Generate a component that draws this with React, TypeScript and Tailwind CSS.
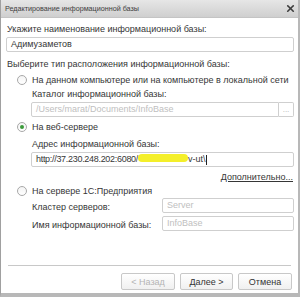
import { X } from 'lucide-react';

function Radio({ checked }: { checked?: boolean }) {
  return (
    <span className="w-[10px] h-[10px] rounded-full border border-[#a8a8a8] bg-gradient-to-b from-[#f4f4f4] to-white flex items-center justify-center shrink-0">
      {checked && <span className="w-[4px] h-[4px] rounded-full bg-[#3a9a3a]" />}
    </span>
  );
}

function Field({ children, className = '' }: { children?: React.ReactNode; className?: string }) {
  return (
    <div className={`h-[15px] border border-[#cfcfcf] rounded-[2px] bg-white flex items-center px-[4px] leading-none whitespace-nowrap overflow-hidden ${className}`}>
      {children}
    </div>
  );
}

function Button({ children, disabled }: { children: React.ReactNode; disabled?: boolean }) {
  return (
    <div
      className={`h-[17px] border border-[#c8c8c8] rounded-[2px] bg-gradient-to-b from-white to-[#f0f0f0] flex items-center justify-center ${
        disabled ? 'text-[#b4b4b4]' : 'text-[#333]'
      }`}
    >
      {children}
    </div>
  );
}

export default function App() {
  return (
    <div
      className="w-[300px] h-[297px] bg-white flex flex-col border-l border-[#a0a0a0] border-r-2 border-r-[#b8b8b8] border-b-4 border-b-[#b8b8b8] text-[#363636] text-[9px] leading-[12px] whitespace-nowrap"
      style={{ fontFamily: '"Liberation Sans", Arial, sans-serif' }}
    >
      <div className="h-[18px] shrink-0 bg-gradient-to-b from-[#e6e6e6] to-[#cfcfcf] flex items-center justify-between pl-[4px] pr-[2px] border-b border-[#c4c4c4]">
        <span className="text-[7.2px] text-[#404040]">Редактирование информационной базы</span>
        <X size={11} strokeWidth={3.5} className="text-[#3c3c3c]" />
      </div>

      <div className="flex flex-col pl-[5px] pr-[4px]">
        <div className="mt-[5px] pl-[1px]">Укажите наименование информационной базы:</div>
        <Field className="mt-[2px]">Адимузаметов</Field>

        <div className="mt-[6px] pl-[1px]">Выберите тип расположения информационной базы:</div>

        <div className="mt-[3px] h-[13px] flex items-center gap-[5px] pl-[11px]">
          <Radio />
          <span>На данном компьютере или на компьютере в локальной сети</span>
        </div>
        <div className="mt-[2px] pl-[26px]">Каталог информационной базы:</div>
        <div className="mt-[2px] ml-[25px] flex">
          <Field className="flex-1 text-[#c0c0c0] rounded-r-none">/Users/marat/Documents/InfoBase</Field>
          <div className="w-[15px] h-[15px] border border-l-0 border-[#cfcfcf] rounded-r-[2px] flex items-center justify-center text-[#b0b0b0] text-[8px]">
            ...
          </div>
        </div>

        <div className="mt-[3px] h-[13px] flex items-center gap-[5px] pl-[11px]">
          <Radio checked />
          <span>На веб-сервере</span>
        </div>
        <div className="mt-[5px] pl-[26px]">Адрес информационной базы:</div>
        <div className="mt-[2px] ml-[25px]">
          <Field>
            <span className="tracking-[-0.3px]">http://37.230.248.202:6080/</span>
            <span className="inline-block w-[50px] h-[8px] -mt-[3px] rounded-full bg-[#f4ef2a]" />
            <span>v-ut\</span>
            <span className="inline-block w-px h-[10px] bg-[#222]" />
          </Field>
        </div>
        <div className="mt-[4px] text-right pr-[1px]">
          <span className="underline">Дополнительно...</span>
        </div>

        <div className="mt-[1px] h-[13px] flex items-center gap-[5px] pl-[11px]">
          <Radio />
          <span>На сервере 1С:Предприятия</span>
        </div>
        <div className="mt-[1px] flex items-center">
          <span className="pl-[26px] w-[156px] pt-[3px]">Кластер серверов:</span>
          <Field className="flex-1 text-[#c0c0c0]">Server</Field>
        </div>
        <div className="mt-[3px] flex items-center">
          <span className="pl-[26px] w-[156px] pt-[3px]">Имя информационной базы:</span>
          <Field className="flex-1 text-[#c0c0c0]">InfoBase</Field>
        </div>
      </div>

      <div className="mt-auto mx-[6px] mb-[3px] flex flex-col">
        <div className="h-px bg-[#c8c8c8] mx-[1px]" />
        <div className="mt-[7px] flex justify-end gap-[5px]">
          <div className="w-[54px]"><Button disabled>&lt; Назад</Button></div>
          <div className="w-[53px]"><Button>Далее &gt;</Button></div>
          <div className="w-[54px]"><Button>Отмена</Button></div>
        </div>
      </div>
    </div>
  );
}
